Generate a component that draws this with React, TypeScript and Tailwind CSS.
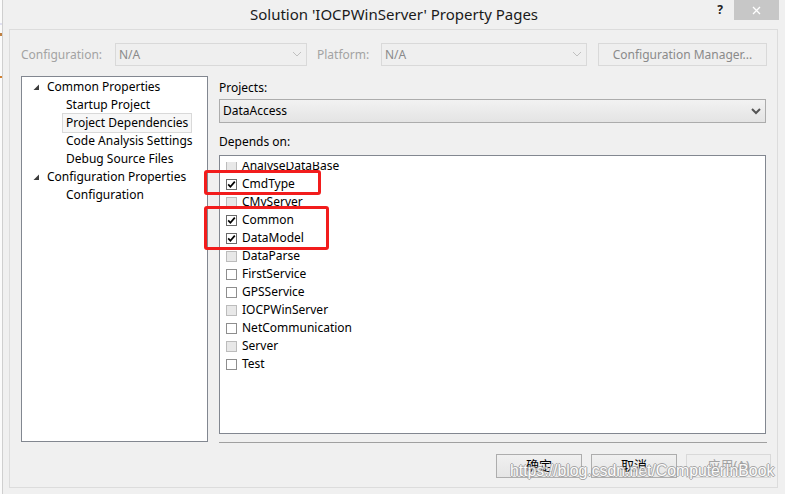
import React from "react";

const FONT = "font-['Noto_Sans','Noto_Sans_CJK_SC',sans-serif]";

function Chevron({ color, weight }: { color: string; weight: number }) {
  return (
    <svg width="10" height="7" viewBox="0 0 10 7" className="block">
      <path d="M1 1 L5 5 L9 1" fill="none" stroke={color} strokeWidth={weight} />
    </svg>
  );
}

function TreeArrow() {
  return (
    <svg width="7" height="7" viewBox="0 0 7 7" className="block">
      <polygon points="6,0.5 6,6 0.5,6" fill="#3c3c3c" />
    </svg>
  );
}

type Item = { name: string; checked?: boolean; dim?: boolean };

const items: Item[] = [
  { name: "AnalyseDataBase", dim: true },
  { name: "CmdType", checked: true },
  { name: "CMyServer", dim: true },
  { name: "Common", checked: true },
  { name: "DataModel", checked: true },
  { name: "DataParse", dim: true },
  { name: "FirstService" },
  { name: "GPSService" },
  { name: "IOCPWinServer", dim: true },
  { name: "NetCommunication" },
  { name: "Server", dim: true },
  { name: "Test" },
];

function CheckBox({ checked, dim }: { checked?: boolean; dim?: boolean }) {
  const cls = checked
    ? "border-[#6a6a6a] bg-white"
    : dim
    ? "border-[#bcbcbc] bg-[#e8e8e8]"
    : "border-[#8e8e8e] bg-white";
  return (
    <div className={`w-[11px] h-[11px] border ${cls} flex items-center justify-center shrink-0`}>
      {checked && (
        <svg width="9" height="9" viewBox="0 0 9 9" className="block">
          <path d="M1.2 4.4 L3.4 6.8 L7.8 1.6" fill="none" stroke="#000" strokeWidth="1.7" />
        </svg>
      )}
    </div>
  );
}

export default function App() {
  return (
    <div className={`w-[785px] h-[494px] flex bg-[#f0f0f0] overflow-hidden relative ${FONT} text-[12px] text-black`}>
      {/* background window fragment */}
      <div className="w-[2px] h-full bg-[#fbfbfb] flex flex-col">
        <div className="h-[23px]" />
        <div className="h-[2px] bg-[#e0e0f0]" />
        <div className="h-[8px]" />
        <div className="h-[3px] bg-[#c08040]" />
        <div className="h-[40px]" />
        <div className="h-[2px] bg-[#d08030]" />
      </div>
      <div className="flex-1 flex flex-col border-l border-[#cfcfcf]">
        {/* title bar */}
        <div className="h-[29px] grid grid-cols-[1fr_auto_1fr]">
          <div />
          <div className="flex items-center justify-center text-[15px] text-[#1a1a1a] pb-[1px]">
            Solution 'IOCPWinServer' Property Pages
          </div>
          <div className="flex justify-end items-start pr-[6px]">
            <div className="mt-[2px] mr-[11px] text-[12px] font-bold text-[#222] leading-[16px]">?</div>
            <div className="w-[45px] h-[20px] bg-[#c7c7c7] flex items-center justify-center">
              <svg width="9" height="9" viewBox="0 0 9 9" className="block">
                <path d="M1 1 L8 8 M8 1 L1 8" stroke="#fff" strokeWidth="1.3" />
              </svg>
            </div>
          </div>
        </div>

        {/* main panel */}
        <div className="flex-1 ml-[6px] mr-[7px] mb-[6px] border border-[#dcdcdc] flex flex-col">
          {/* configuration row */}
          <div className="mt-[13px] h-[23px] flex items-center pl-[11px] pr-[10px] text-[#a3a3a3]">
            <div className="w-[94px]">Configuration:</div>
            <div className="w-[192px] h-[23px] border border-[#d9d9d9] bg-[#efefef] flex items-center pl-[3px] pr-[4px] text-[#8a8a8a]">
              <span className="flex-1">N/A</span>
              <Chevron color="#c0c0c0" weight={1} />
            </div>
            <div className="w-[64px] ml-[10px]">Platform:</div>
            <div className="w-[206px] h-[23px] border border-[#d9d9d9] bg-[#efefef] flex items-center pl-[3px] pr-[4px] text-[#8a8a8a]">
              <span className="flex-1">N/A</span>
              <Chevron color="#c0c0c0" weight={1} />
            </div>
            <div className="ml-auto w-[169px] h-[23px] border border-[#d9d9d9] bg-[#efefef] flex items-center justify-center text-[#8a8a8a]">
              Configuration Manager...
            </div>
          </div>

          {/* main row */}
          <div className="mt-[10px] flex gap-[11px] pl-[11px] pr-[11px]">
            {/* tree */}
            <div className="w-[187px] h-[366px] border border-[#828790] bg-white pt-[1px] self-start">
              <div className="h-[18px] flex items-center">
                <div className="ml-[11px] w-[7px]"><TreeArrow /></div>
                <span className="ml-[7px]">Common Properties</span>
              </div>
              <div className="h-[18px] flex items-center pl-[44px]">Startup Project</div>
              <div className="h-[18px] flex items-center pl-[40px]">
                <span className="h-[20px] flex items-center border border-[#d9d9d9] bg-[#f7f7f7] px-[3px]">
                  Project Dependencies
                </span>
              </div>
              <div className="h-[18px] flex items-center pl-[44px]">Code Analysis Settings</div>
              <div className="h-[18px] flex items-center pl-[44px]">Debug Source Files</div>
              <div className="h-[18px] flex items-center">
                <div className="ml-[11px] w-[7px]"><TreeArrow /></div>
                <span className="ml-[7px]">Configuration Properties</span>
              </div>
              <div className="h-[18px] flex items-center pl-[44px]">Configuration</div>
            </div>

            {/* right column */}
            <div className="w-[547px] flex flex-col">
              <div className="h-[23px] flex items-center">Projects:</div>
              <div className="h-[24px] border border-[#acacac] bg-gradient-to-b from-[#f2f2f2] to-[#e4e4e4] flex items-center pl-[3px] pr-[4px]">
                <span className="flex-1">DataAccess</span>
                <Chevron color="#555" weight={2} />
              </div>
              <div className="mt-[9px] h-[20px] mb-[3px] flex items-center">Depends on:</div>
              <div className="h-[279px] border border-[#828790] bg-white flex flex-col">
                <div className="mt-[6px] flex-1 overflow-hidden">
                  <div className="-mt-[5px] flex flex-col">
                    {items.map((it) => (
                      <div key={it.name} className="h-[18px] flex items-center pl-[6px]">
                        <CheckBox checked={it.checked} dim={it.dim} />
                        <span className="ml-[5px]">{it.name}</span>
                      </div>
                    ))}
                  </div>
                </div>
              </div>
              <div className="mt-[8px] h-[1px] bg-[#a0a0a0] w-[548px]" />
            </div>
          </div>

          {/* buttons */}
          <div className="mt-[11px] h-[24px] flex justify-end gap-[9px] pr-[6px] text-[13px]">
            <div className="w-[86px] h-[24px] border border-[#adadad] bg-gradient-to-b from-[#f0f0f0] to-[#e5e5e5] flex items-center justify-center">
              确定
            </div>
            <div className="w-[86px] h-[24px] border border-[#adadad] bg-gradient-to-b from-[#f0f0f0] to-[#e5e5e5] flex items-center justify-center">
              取消
            </div>
            <div className="w-[85px] h-[24px] border border-[#d9d9d9] bg-[#efefef] flex items-center justify-center text-[#a3a3a3]">
              应用(A)
            </div>
          </div>
        </div>
      </div>

      {/* annotation boxes */}
      <div className="absolute left-[204px] top-[170px] w-[117px] h-[25px] border-[3px] border-[#f21c1c] rounded-[3px]" />
      <div className="absolute left-[204px] top-[206px] w-[125px] h-[44px] border-[3px] border-[#f21c1c] rounded-[3px]" />

      {/* watermark */}
      <div className="absolute left-[510px] top-[461px] whitespace-nowrap font-['Liberation_Sans',sans-serif] text-[15.8px] leading-[20px] text-white opacity-85 [text-shadow:1px_0_0_#9a9a9a,-1px_0_0_#9a9a9a,0_1px_0_#9a9a9a,0_-1px_0_#9a9a9a]">
        https://blog.csdn.net/ComputerInBook
      </div>
    </div>
  );
}
